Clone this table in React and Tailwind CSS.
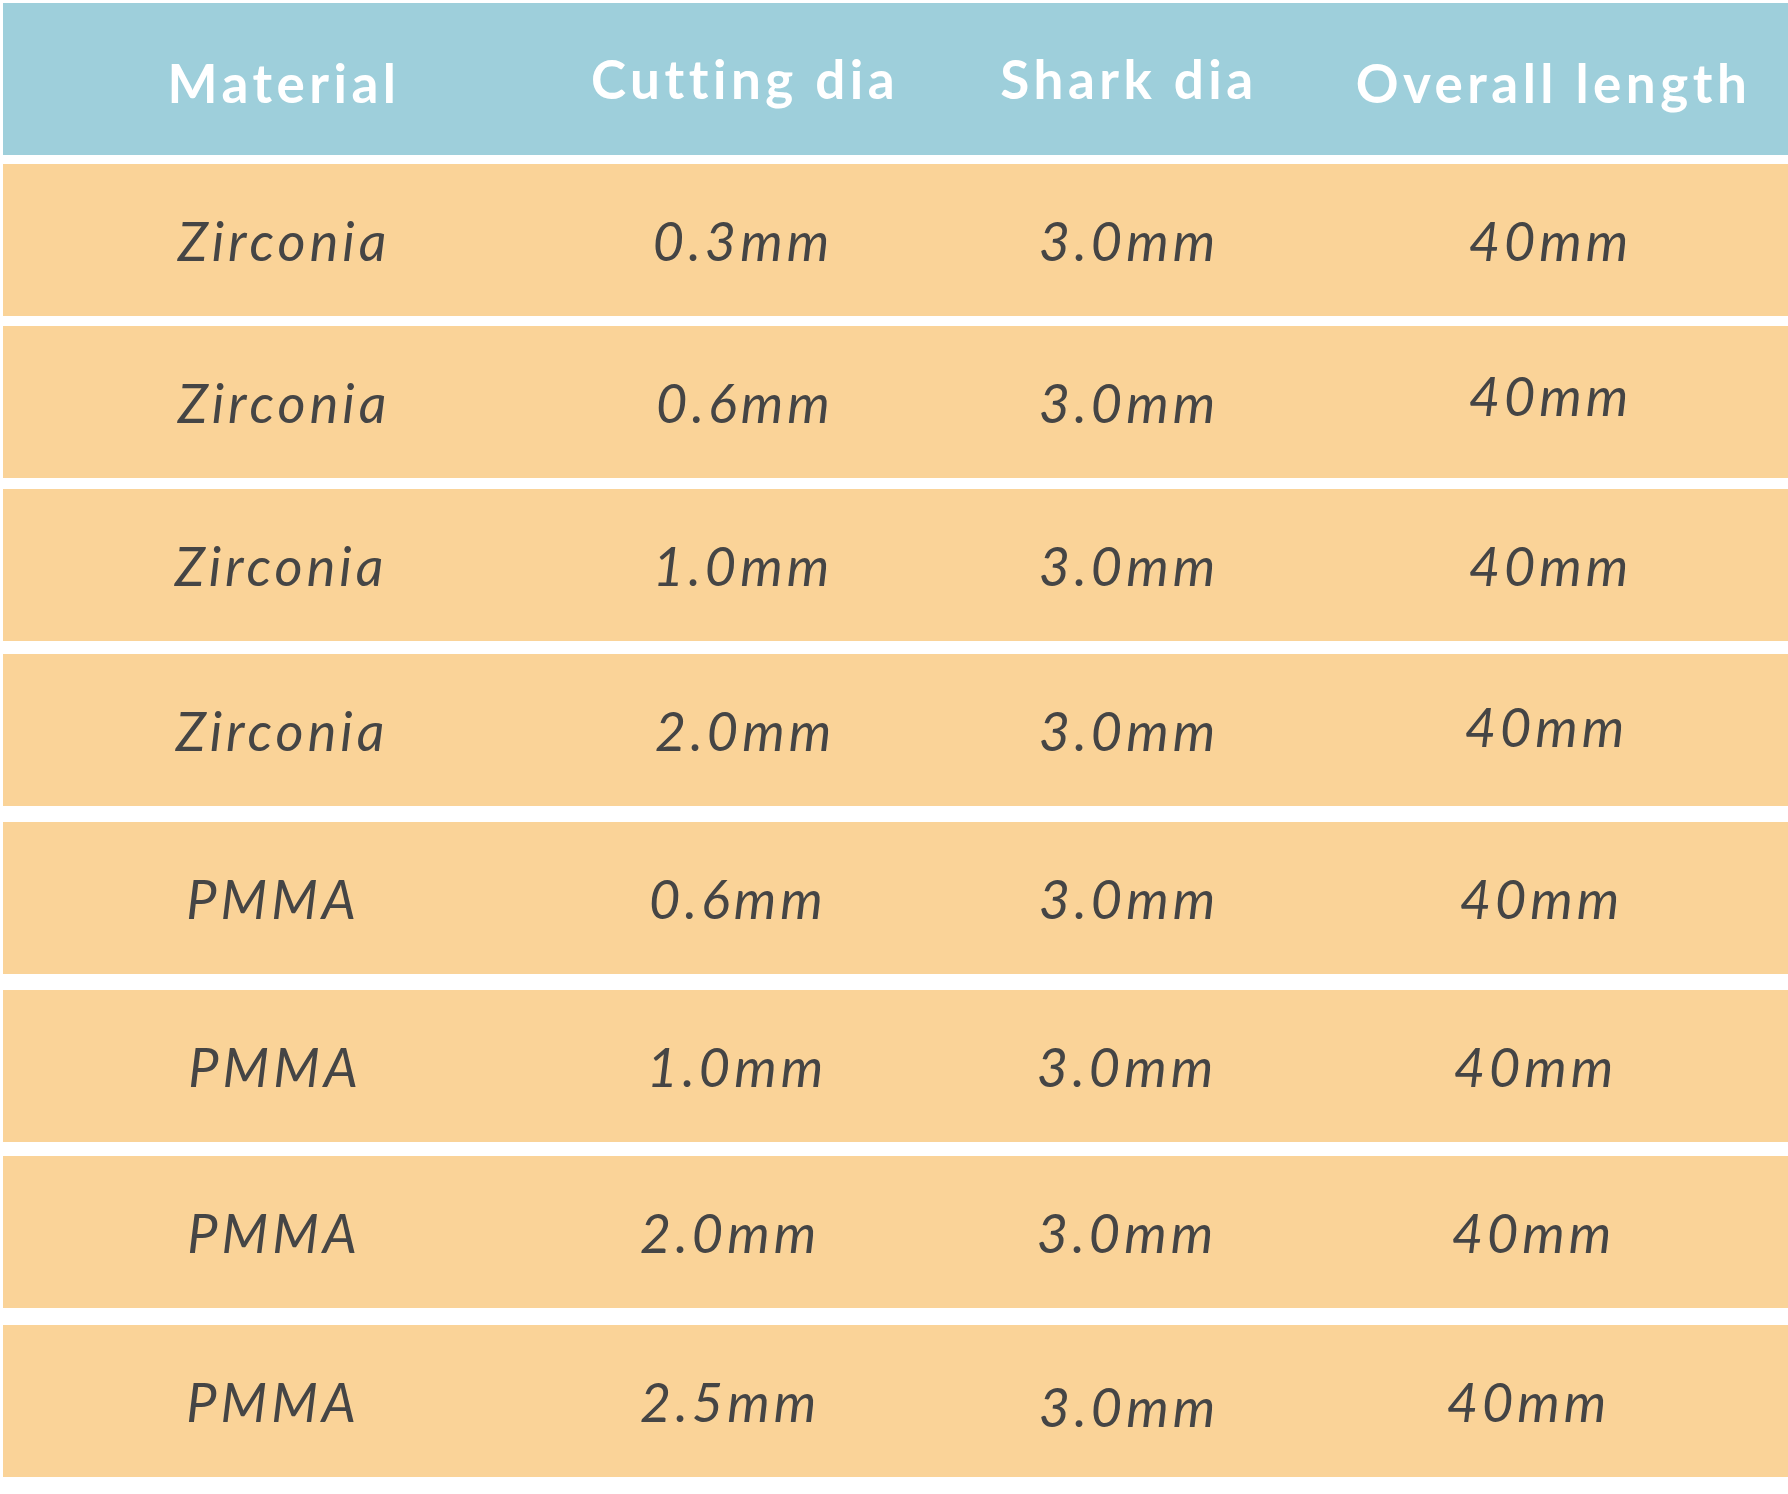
import React from 'react';

// per-cell nudges: the source table is hand-placed, columns drift a bit row to row
const rows = [
  { material: 'Zirconia', cutting: '0.3mm', mt: 'mt-[9px]', dx: ['', 'translate-x-[-2px]', '', ''] },
  { material: 'Zirconia', cutting: '0.6mm', mt: 'mt-[10px]', dx: ['', '', '', 'translate-y-[-7px]'] },
  { material: 'Zirconia', cutting: '1.0mm', mt: 'mt-[11px]', dx: ['translate-x-[-3px]', 'translate-x-[-2px]', '', ''] },
  { material: 'Zirconia', cutting: '2.0mm', mt: 'mt-[13px]', dx: ['translate-x-[-2px]', '', '', 'translate-x-[-4px] translate-y-[-4px]'] },
  { material: 'PMMA', cutting: '0.6mm', mt: 'mt-[16px]', dx: ['translate-x-[-11px]', 'translate-x-[-7px]', '', 'translate-x-[-9px]'] },
  { material: 'PMMA', cutting: '1.0mm', mt: 'mt-[16px]', dx: ['translate-x-[-9px]', 'translate-x-[-8px]', 'translate-x-[-2px]', 'translate-x-[-15px]'] },
  { material: 'PMMA', cutting: '2.0mm', mt: 'mt-[14px]', dx: ['translate-x-[-10px]', 'translate-x-[-15px]', 'translate-x-[-2px]', 'translate-x-[-17px]'] },
  { material: 'PMMA', cutting: '2.5mm', mt: 'mt-[17px]', dx: ['translate-x-[-11px]', 'translate-x-[-15px]', 'translate-y-[5px]', 'translate-x-[-22px]'] },
];

const cols = 'grid grid-cols-[562px_360px_408px_1fr] items-center';

const App = () => {
  return (
    <div className="w-[1788px] h-[1494px] bg-white pt-[3px] pl-[3px] font-['Lato','Liberation_Sans',sans-serif]">
      {/* Header */}
      <div className={`${cols} h-[152px] bg-[#9ecfdb] text-white font-bold text-[53px] tracking-[4.5px]`}>
        <div className="text-center pt-[8px]">Material</div>
        <div className="text-center">Cutting dia</div>
        <div className="text-center">Shark dia</div>
        <div className="text-center pt-[8px] pr-[14px]">Overall length</div>
      </div>

      {/* Rows */}
      {rows.map((row, i) => (
        <div
          key={i}
          className={`${cols} ${row.mt} h-[152px] bg-[#fad398] text-[#454545] italic font-normal text-[54px] tracking-[4px]`}
        >
          <div className={`text-center ${row.dx[0]}`}>{row.material}</div>
          <div className={`text-center ${row.dx[1]}`}>{row.cutting}</div>
          <div className={`text-center ${row.dx[2]}`}>3.0mm</div>
          <div className={`text-center pr-[20px] ${row.dx[3]}`}>40mm</div>
        </div>
      ))}
    </div>
  );
};

export default App;
